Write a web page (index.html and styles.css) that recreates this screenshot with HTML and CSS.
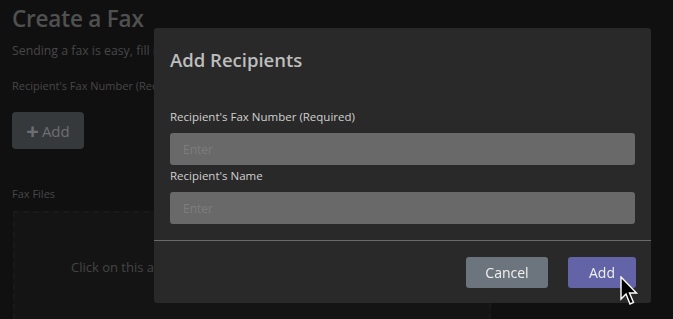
FILE: index.html
```html
<!DOCTYPE html>
<html lang="en">
  <head>
    <meta charset="UTF-8" />
    <title>Create a Fax</title>
    <link rel="stylesheet" href="styles.css">
  </head>
  <body>
    <!-- page behind the dialog -->
    <div class="page">
      <h1>Create a Fax</h1>
      <p class="lead">Sending a fax is easy, fill in the details below and press send.</p>
      <p class="field-label">Recipient's Fax Number (Required)</p>
      <button class="page-add"><span class="plus">+</span>Add</button>
      <p class="field-label files">Fax Files</p>
      <div class="dropzone">Click on this area to select the files you want to send</div>
    </div>

    <!-- dialog -->
    <div class="overlay">
      <div class="modal">
        <h2>Add Recipients</h2>
        <div class="modal-body">
          <label for="faxNumber">Recipient's Fax Number (Required)</label>
          <input type="text" id="faxNumber" placeholder="Enter" />
          <label for="faxName">Recipient's Name</label>
          <input type="text" id="faxName" placeholder="Enter" />
        </div>
        <div class="modal-footer">
          <button class="btn cancel">Cancel</button>
          <button class="btn add">Add</button>
          <svg class="cursor" width="20" height="30" viewBox="0 0 20 30">
            <path d="M1 1 L1 23 L6 18 L10 28 L13.5 26.5 L9.5 17 L16.5 17 Z" fill="#000" stroke="#fff" stroke-width="1.4" stroke-linejoin="miter"/>
          </svg>
        </div>
      </div>
    </div>
  </body>
</html>
```

FILE: styles.css
```css
* {
  margin: 0;
  padding: 0;
  box-sizing: border-box;
  font-family: "Open Sans", "Noto Sans", sans-serif;
}

body {
  background: #101010;
  width: 673px;
  height: 319px;
  overflow: hidden;
}

/* page behind the dialog */
.page {
  padding: 4px 12px;
  color: #4a4a4a;
}

h1 {
  font-size: 22.5px;
  font-weight: 600;
  color: #505050;
  line-height: 30px;
  letter-spacing: -0.2px;
}

.lead {
  font-size: 12.3px;
  margin-top: 8px;
  color: #474747;
  white-space: nowrap;
}

.field-label {
  font-size: 11px;
  margin-top: 19px;
  color: #474747;
  white-space: nowrap;
}

.page-add {
  margin-top: 19px;
  width: 72px;
  height: 37px;
  border: none;
  border-radius: 4px;
  background: #36393c;
  color: #6c6f72;
  font-size: 15px;
  display: flex;
  align-items: center;
  justify-content: center;
  gap: 3px;
}

.plus {
  font-size: 22px;
  font-weight: 700;
  line-height: 1;
  margin-top: -2px;
}

.files {
  margin-top: 37px;
}

.dropzone {
  margin-top: 10px;
  margin-left: 1px;
  width: 478px;
  height: 140px;
  border: 2px dashed #191919;
  background: #141414;
  padding-top: 45px;
  padding-left: 56px;
  font-size: 13px;
  color: #454545;
  white-space: nowrap;
  overflow: hidden;
}

/* dialog */
.overlay {
  position: fixed;
  inset: 0;
  padding: 28px 0 0 154px;
}

.modal {
  width: 497px;
  height: 275px;
  background: #292929;
  border-radius: 3px;
  color: #cfcfcf;
}

h2 {
  font-size: 18.5px;
  font-weight: 600;
  color: #bdbdbd;
  padding: 19px 16px 0;
  line-height: 26px;
}

.modal-body {
  padding: 36px 16px 0;
  display: flex;
  flex-direction: column;
}

label {
  font-size: 11.5px;
  color: #d0d0d0;
  line-height: 16px;
}

input[type="text"] {
  height: 32px;
  margin-top: 8px;
  margin-bottom: 3px;
  border: none;
  border-radius: 3px;
  background: #696969;
  padding: 0 13px;
  font-size: 12px;
  outline: none;
}

input[type="text"]::placeholder {
  color: #7d7d7d;
}

.modal-footer {
  margin-top: 13px;
  border-top: 1px solid #6a6a6a;
  padding: 16px 15px 0;
  display: flex;
  justify-content: flex-end;
  gap: 20px;
  position: relative;
}

.btn {
  height: 31px;
  border: none;
  border-radius: 3px;
  color: #f0f0f0;
  font-size: 14px;
}

.cancel {
  width: 82px;
  background: #6c757d;
}

.add {
  width: 68px;
  background: #6264a7;
}

.cursor {
  position: absolute;
  left: 466px;
  top: 35px;
}
```
